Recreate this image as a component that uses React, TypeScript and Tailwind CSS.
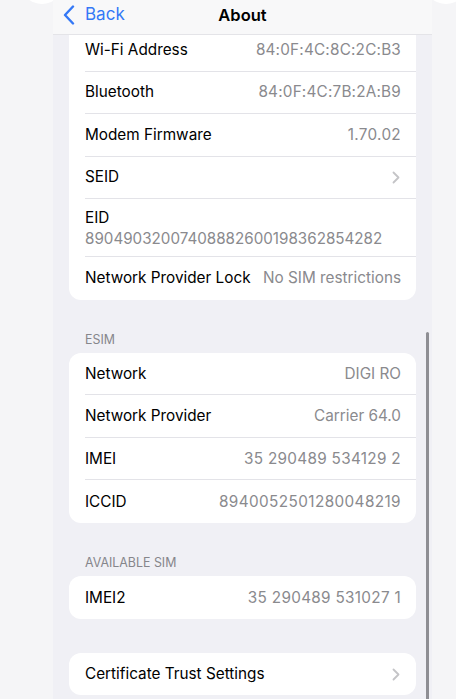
import React from "react";

type Row = { label: string; value?: string; chevron?: boolean; track?: string };

const font = { fontFamily: "Inter, 'Noto Sans', sans-serif" };

function Chevron() {
  return (
    <svg width="8" height="13" viewBox="0 0 8 13" className="shrink-0">
      <path d="M1.5 1.5 L6.5 6.5 L1.5 11.5" fill="none" stroke="#c4c4c7" strokeWidth="1.8" strokeLinecap="round" strokeLinejoin="round" />
    </svg>
  );
}

function SettingRow({ row, last }: { row: Row; last?: boolean }) {
  return (
    <div className="pl-4">
      <div className={`flex h-[42.5px] items-center justify-between pr-[15px] pt-[1px] ${last ? "" : "border-b border-[#e3e3e8]"}`}>
        <span className="text-[15.3px] text-black">{row.label}</span>
        {row.value && <span className={`text-[15.3px] text-[#8a8a8e] ${row.track ?? ""}`}>{row.value}</span>}
        {row.chevron && (
          <span className="pr-[1px]">
            <Chevron />
          </span>
        )}
      </div>
    </div>
  );
}

function Card({ children, className = "" }: { children: React.ReactNode; className?: string }) {
  return <div className={`mx-4 overflow-hidden rounded-xl bg-white ${className}`}>{children}</div>;
}

function SectionLabel({ text }: { text: string }) {
  return <div className="px-8 pb-[7px] text-[12.4px] uppercase leading-none text-[#86868b]">{text}</div>;
}

export default function App() {
  const top: Row[] = [
    { label: "Wi-Fi Address", value: "84:0F:4C:8C:2C:B3", track: "tracking-[0.2px]" },
    { label: "Bluetooth", value: "84:0F:4C:7B:2A:B9", track: "tracking-[0.2px]" },
    { label: "Modem Firmware", value: "1.70.02", track: "tracking-[0.3px]" },
    { label: "SEID", chevron: true },
  ];
  const esim: Row[] = [
    { label: "Network", value: "DIGI RO" },
    { label: "Network Provider", value: "Carrier 64.0" },
    { label: "IMEI", value: "35 290489 534129 2", track: "tracking-[0.3px]" },
    { label: "ICCID", value: "8940052501280048219", track: "tracking-[0.4px]" },
  ];

  return (
    <div className="relative flex h-[699px] w-[456px] overflow-hidden bg-[#f5f5f7]" style={font}>
      <div className="absolute -top-[40px] left-[20px] h-[44px] w-[44px] rounded-full bg-white" />
      <div className="absolute -top-[38px] left-[375px] h-[44px] w-[44px] rounded-full bg-white" />
      <div className="absolute -top-[40px] left-[424px] h-[44px] w-[44px] rounded-full bg-white" />

      <div className="w-[53px] shrink-0" />

      <div className="relative flex w-[379px] shrink-0 flex-col bg-[#f0f0f5]">
        <header className="relative z-10 flex h-[35px] shrink-0 items-center border-b border-[#e4e4e8] bg-[#f8f8f9] pb-[4px]">
          <div className="flex items-center pl-[10px] text-[17px] text-[#3478f6]">
            <svg width="12" height="20" viewBox="0 0 12 20" className="mr-[10px]">
              <path d="M10 1.5 L2 10 L10 18.5" fill="none" stroke="#3478f6" strokeWidth="2.4" strokeLinecap="round" strokeLinejoin="round" />
            </svg>
            <span>Back</span>
          </div>
          <div className="pointer-events-none absolute inset-x-0 text-center text-[16.5px] font-semibold text-black">About</div>
        </header>

        <div className="flex-1 overflow-hidden">
          <Card className="-mt-[6px] rounded-t-none">
            {top.map((r) => (
              <SettingRow key={r.label} row={r} />
            ))}
            <div className="pl-4">
              <div className="flex h-[58px] flex-col justify-center border-b border-[#e3e3e8] pr-[15px] pt-[1px]">
                <span className="text-[15.3px] leading-[21px] text-black">EID</span>
                <span className="text-[15.2px] leading-[22px] text-[#8a8a8e]">89049032007408882600198362854282</span>
              </div>
            </div>
            <SettingRow row={{ label: "Network Provider Lock", value: "No SIM restrictions" }} last />
          </Card>

          <div className="pt-[34px]">
            <SectionLabel text="eSIM" />
          </div>
          <Card>
            {esim.map((r, i) => (
              <SettingRow key={r.label} row={r} last={i === esim.length - 1} />
            ))}
          </Card>

          <div className="pt-[34px]">
            <SectionLabel text="Available SIM" />
          </div>
          <Card>
            <SettingRow row={{ label: "IMEI2", value: "35 290489 531027 1", track: "tracking-[0.3px]" }} last />
          </Card>

          <Card className="mt-[34px]">
            <SettingRow row={{ label: "Certificate Trust Settings", chevron: true }} last />
          </Card>
        </div>

        <div className="absolute right-[3px] top-[332px] h-[380px] w-[3px] rounded-full bg-[#8e8e93]" />
      </div>
    </div>
  );
}
